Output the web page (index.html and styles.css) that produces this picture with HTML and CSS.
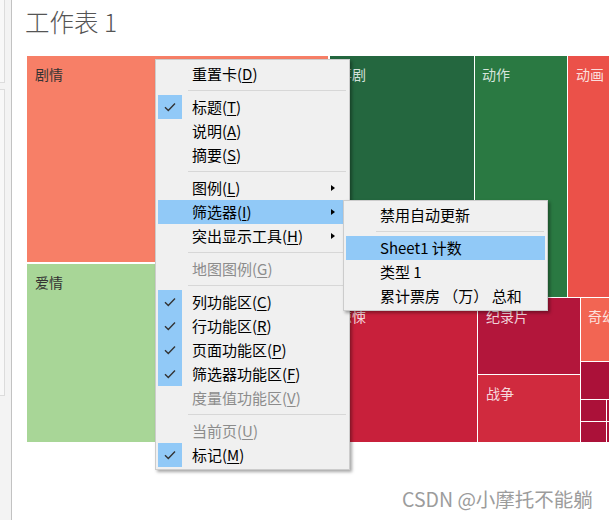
FILE: index.html
```html
<!DOCTYPE html>
<html lang="zh-CN">
<head>
<meta charset="utf-8">
<title>工作表 1</title>
<link rel="stylesheet" href="styles.css">
</head>
<body>
<div class="app">
  <aside class="sidebar">
    <div class="sb-box sb-box1"></div>
    <div class="sb-box sb-box2"></div>
  </aside>
  <main class="main">
    <h1 class="title">工作表 1</h1>
    <div class="treemap">
      <div class="col-a">
        <div class="cell c-drama dark-text h-drama">剧情</div>
        <div class="cell c-romance dark-text grow">爱情</div>
      </div>
      <div class="col-b">
        <div class="row-top">
          <div class="cell c-comedy w-comedy">喜剧</div>
          <div class="cell c-action w-action">动作</div>
          <div class="cell c-anim grow">动画</div>
        </div>
        <div class="row-bottom">
          <div class="cell c-thriller w-thriller">惊悚</div>
          <div class="stack w-doc">
            <div class="cell c-doc h-doc">纪录片</div>
            <div class="cell c-war grow">战争</div>
          </div>
          <div class="stack grow">
            <div class="cell c-fantasy h-fantasy">奇幻</div>
            <div class="cell c-deep h-deep"></div>
            <div class="mini-row h-mini1">
              <div class="cell c-deep w-mini"></div>
              <div class="cell c-deep grow"></div>
            </div>
            <div class="mini-row grow">
              <div class="cell c-deep w-mini"></div>
              <div class="cell c-deep grow"></div>
            </div>
          </div>
        </div>
      </div>
    </div>
  </main>

  <div class="menu main-menu">
    <div class="item"><span class="chk"></span><span class="label">重置卡(<u>D</u>)</span></div>
    <div class="sep"></div>
    <div class="item"><span class="chk on"><svg viewBox="0 0 12 10" width="12" height="10"><path d="M1 5.2 L4.3 8.4 L11 1.6" fill="none" stroke="#333" stroke-width="1.4"/></svg></span><span class="label">标题(<u>T</u>)</span></div>
    <div class="item"><span class="chk"></span><span class="label">说明(<u>A</u>)</span></div>
    <div class="item"><span class="chk"></span><span class="label">摘要(<u>S</u>)</span></div>
    <div class="sep"></div>
    <div class="item"><span class="chk"></span><span class="label">图例(<u>L</u>)</span><span class="arrow"></span></div>
    <div class="item hl"><span class="chk"></span><span class="label">筛选器(<u>I</u>)</span><span class="arrow"></span></div>
    <div class="item"><span class="chk"></span><span class="label">突出显示工具(<u>H</u>)</span><span class="arrow"></span></div>
    <div class="sep"></div>
    <div class="item disabled"><span class="chk"></span><span class="label">地图图例(<u>G</u>)</span></div>
    <div class="sep"></div>
    <div class="item"><span class="chk on"><svg viewBox="0 0 12 10" width="12" height="10"><path d="M1 5.2 L4.3 8.4 L11 1.6" fill="none" stroke="#333" stroke-width="1.4"/></svg></span><span class="label">列功能区(<u>C</u>)</span></div>
    <div class="item"><span class="chk on"><svg viewBox="0 0 12 10" width="12" height="10"><path d="M1 5.2 L4.3 8.4 L11 1.6" fill="none" stroke="#333" stroke-width="1.4"/></svg></span><span class="label">行功能区(<u>R</u>)</span></div>
    <div class="item"><span class="chk on"><svg viewBox="0 0 12 10" width="12" height="10"><path d="M1 5.2 L4.3 8.4 L11 1.6" fill="none" stroke="#333" stroke-width="1.4"/></svg></span><span class="label">页面功能区(<u>P</u>)</span></div>
    <div class="item"><span class="chk on"><svg viewBox="0 0 12 10" width="12" height="10"><path d="M1 5.2 L4.3 8.4 L11 1.6" fill="none" stroke="#333" stroke-width="1.4"/></svg></span><span class="label">筛选器功能区(<u>F</u>)</span></div>
    <div class="item disabled"><span class="chk"></span><span class="label">度量值功能区(<u>V</u>)</span></div>
    <div class="sep"></div>
    <div class="item disabled"><span class="chk"></span><span class="label">当前页(<u>U</u>)</span></div>
    <div class="item"><span class="chk on"><svg viewBox="0 0 12 10" width="12" height="10"><path d="M1 5.2 L4.3 8.4 L11 1.6" fill="none" stroke="#333" stroke-width="1.4"/></svg></span><span class="label">标记(<u>M</u>)</span></div>
  </div>

  <div class="menu sub-menu">
    <div class="item"><span class="chk"></span><span class="label">禁用自动更新</span></div>
    <div class="sep"></div>
    <div class="item hl"><span class="chk"></span><span class="label">Sheet1 计数</span></div>
    <div class="item"><span class="chk"></span><span class="label">类型 1</span></div>
    <div class="item"><span class="chk"></span><span class="label">累计票房 （万） 总和</span></div>
  </div>

  <div class="watermark">CSDN @小摩托不能躺</div>
</div>
</body>
</html>
```

FILE: styles.css
```css
html, body {
  margin: 0;
  padding: 0;
  background: #ffffff;
}
body {
  width: 609px;
  height: 520px;
  overflow: hidden;
  font-family: "Noto Sans CJK SC", "Microsoft YaHei", sans-serif;
}
.app {
  position: relative;
  display: flex;
  width: 609px;
  height: 520px;
  overflow: hidden;
}

/* left sidebar */
.sidebar {
  width: 11px;
  flex: none;
  background: #f3f3f3;
  border-right: 1px solid #c2c2c2;
  display: flex;
  flex-direction: column;
}
.sb-box {
  width: 4px;
  background: #f8f8f8;
  border-right: 1px solid #dcdcdc;
}
.sb-box1 {
  height: 82px;
  border-bottom: 1px solid #dcdcdc;
}
.sb-box2 {
  margin-top: 6px;
  height: 305px;
  border-top: 1px solid #dcdcdc;
  border-bottom: 1px solid #dcdcdc;
}

/* main area */
.main {
  flex: 1;
  min-width: 0;
  padding-left: 15px;
  display: flex;
  flex-direction: column;
}
.title {
  margin: 0 0 0 -2px;
  height: 56px;
  box-sizing: border-box;
  padding-top: 8px;
  font-size: 24.5px;
  line-height: 28px;
  font-weight: 300;
  color: #555555;
}

.treemap {
  height: 386px;
  display: flex;
  gap: 2px;
  overflow: hidden;
}
.col-a {
  width: 301px;
  flex: none;
  display: flex;
  flex-direction: column;
  gap: 2px;
}
.col-b {
  flex: 1;
  min-width: 0;
  display: flex;
  flex-direction: column;
  gap: 1px;
}
.row-top {
  height: 241px;
  display: flex;
  gap: 1px;
}
.row-bottom {
  flex: 1;
  display: flex;
  gap: 1px;
}
.stack {
  display: flex;
  flex-direction: column;
  gap: 1px;
}
.mini-row {
  display: flex;
  gap: 1px;
}
.grow { flex: 1; min-width: 0; min-height: 0; }

.cell {
  box-sizing: border-box;
  padding: 10px 0 0 8px;
  font-size: 14px;
  line-height: 16px;
  color: rgba(255, 255, 255, 0.82);
  white-space: nowrap;
  overflow: hidden;
}
.dark-text { color: #333333; }

.h-drama { height: 206px; }
.w-comedy { width: 144px; flex: none; }
.w-action { width: 92px; flex: none; padding-left: 7px; }
.w-thriller { width: 147px; flex: none; }
.w-doc { width: 102px; flex: none; }
.h-doc { height: 76px; flex: none; }
.h-fantasy { height: 63px; flex: none; padding-left: 7px; }
.h-deep { height: 37px; flex: none; }
.h-mini1 { height: 21px; flex: none; }
.w-mini { width: 25px; flex: none; }

.c-drama { background: #f77f67; }
.c-romance { background: #a8d697; }
.c-comedy { background: #24673f; }
.c-action { background: #2a7942; }
.c-anim { background: #eb5149; }
.c-thriller { background: #c8203b; }
.c-doc { background: #b3163b; }
.c-war { background: #d02a3e; }
.c-fantasy { background: #f26553; }
.c-deep { background: #ab1139; }

/* context menus */
.menu {
  position: absolute;
  box-sizing: border-box;
  background: #f0f0f0;
  border: 1px solid #cccccc;
  padding: 2px;
  box-shadow: 2px 2px 3px rgba(0, 0, 0, 0.35);
  font-size: 15px;
  color: #000000;
}
.main-menu {
  left: 155px;
  top: 59px;
  width: 195px;
}
.sub-menu {
  left: 343px;
  top: 200px;
  width: 205px;
}
.item {
  height: 24px;
  display: flex;
  align-items: center;
  line-height: 24px;
  white-space: nowrap;
}
.item.hl { background: #91c9f7; }
.item.disabled { color: #8c8c8c; }
.chk {
  width: 24px;
  height: 24px;
  flex: none;
  display: flex;
  align-items: center;
  justify-content: center;
}
.chk.on { background: #91c9f7; }
.label {
  flex: 1;
  margin-left: 10px;
}
.label u {
  text-underline-offset: 2px;
}
.arrow {
  flex: none;
  width: 0;
  height: 0;
  margin-right: 12px;
  border-left: 4px solid #000000;
  border-top: 3.5px solid transparent;
  border-bottom: 3.5px solid transparent;
}
.sep {
  height: 1px;
  margin: 4px 1px 4px 30px;
  background: #d7d7d7;
}

.watermark {
  position: absolute;
  left: 402px;
  top: 486px;
  font-size: 19.5px;
  line-height: 26px;
  color: #9c9c9c;
  text-shadow: 0 0 2px #ffffff;
  white-space: nowrap;
}
```
